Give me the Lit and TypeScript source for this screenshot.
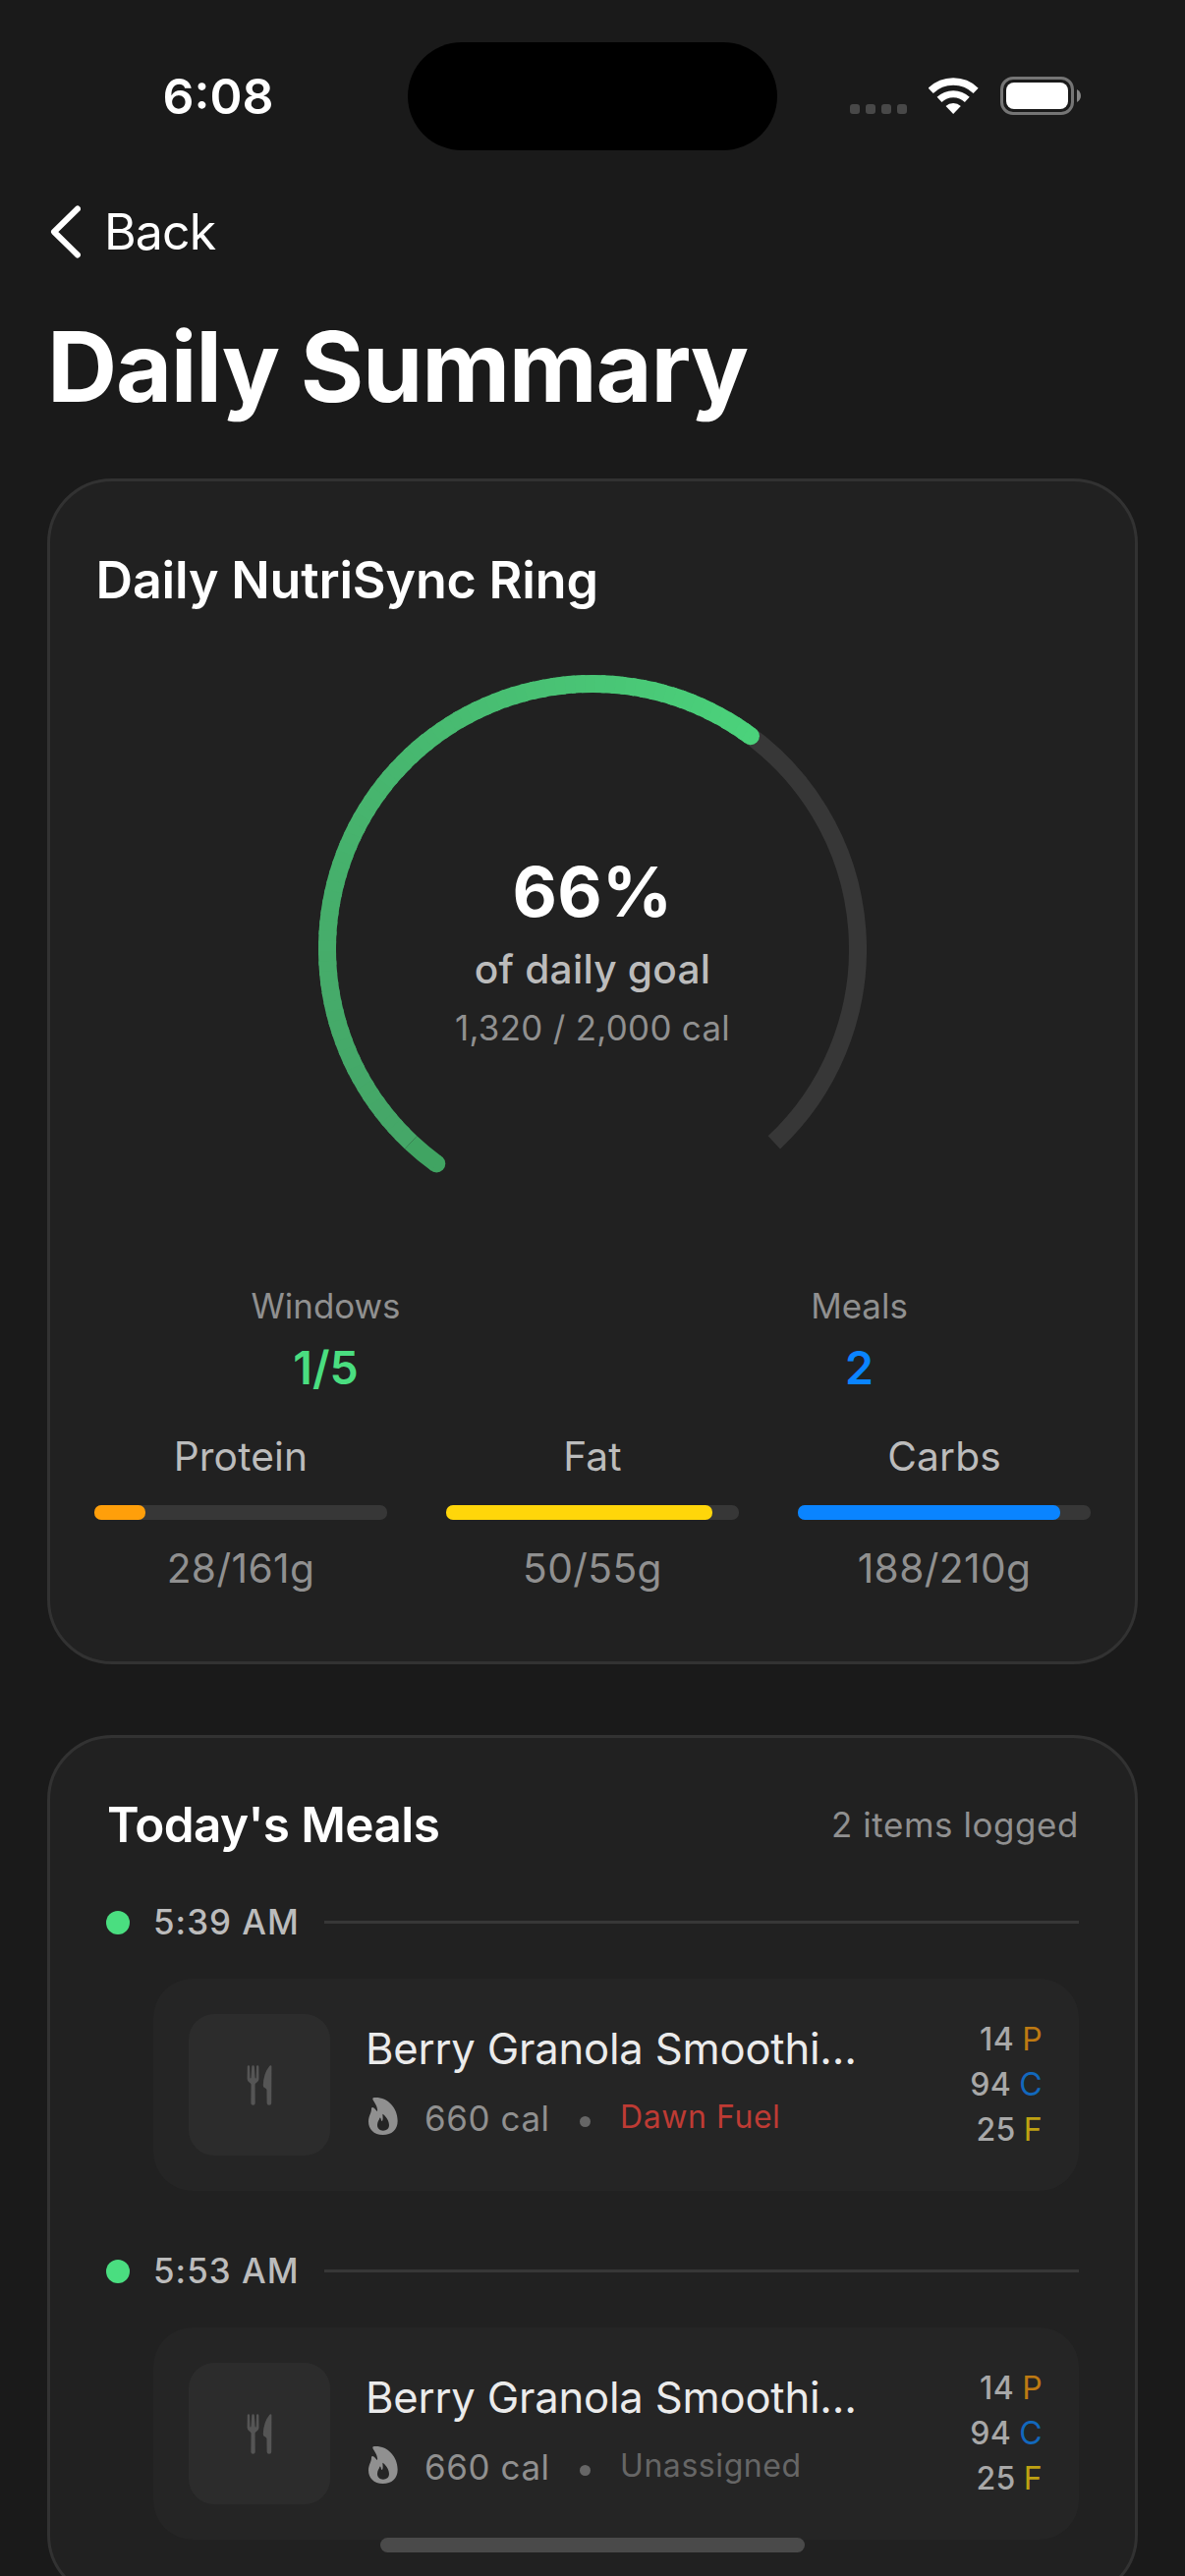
import { LitElement, html, svg, css } from "lit";
import { customElement, property } from "lit/decorators.js";

interface Macro { name: string; value: number; goal: number; tone: string; }
interface Meal { time: string; title: string; calories: number; window: string; assigned: boolean; p: number; c: number; f: number; }

const MACROS: Macro[] = [
  { name: "Protein", value: 28, goal: 161, tone: "orange" },
  { name: "Fat", value: 50, goal: 55, tone: "yellow" },
  { name: "Carbs", value: 188, goal: 210, tone: "blue" },
];

const MEALS: Meal[] = [
  { time: "5:39 AM", title: "Berry Granola Smoothi…", calories: 660, window: "Dawn Fuel", assigned: true, p: 14, c: 94, f: 25 },
  { time: "5:53 AM", title: "Berry Granola Smoothi…", calories: 660, window: "Unassigned", assigned: false, p: 14, c: 94, f: 25 },
];

@customElement("status-bar")
class StatusBar extends LitElement {
  static styles = css`
    :host { display: flex; align-items: center; height: 195px; }
    .time { box-sizing: border-box; width: 415px; padding-left: 165.5px; font-size: 50px; font-weight: 600; line-height: 60px; color: #fff; }
    .island { width: 376px; height: 110px; border-radius: 55px; background: #000; }
    .icons { display: flex; align-items: flex-start; margin-left: 74px; }
    .icons svg { display: block; }
    .wifi { margin-left: 22px; }
    .battery { margin-left: 22px; }
  `;
  render() {
    return html`
      <div class="time">6:08</div>
      <div class="island"></div>
      <div class="icons">
        <svg width="58" height="39" viewBox="0 0 58 39" fill="#484848">
          ${[0, 16, 32, 48].map((x) => svg`<rect x=${x} y="28" width="10" height="10" rx="3"></rect>`)}
        </svg>
        <svg class="wifi" width="51" height="39" viewBox="0 -3 153 117" fill="none" stroke="#fff">
          <path d="M6.7 39.8A99 99 0 0 1 144.3 39.8" stroke-width="22"></path>
          <path d="M33.1 67.1A61 61 0 0 1 117.9 67.1" stroke-width="21"></path>
          <path d="M75.5 111L52.6 87.3A33 33 0 0 1 98.4 87.3Z" fill="#fff" stroke="none"></path>
        </svg>
        <svg class="battery" width="83" height="39" viewBox="0 0 83 39">
          <rect x="1.5" y="1.5" width="72" height="36" rx="11.5" fill="none" stroke="#757575" stroke-width="3"></rect>
          <rect x="6" y="6" width="63" height="27" rx="8" fill="#fff"></rect>
          <path d="M78 13C83.3 15.5 83.3 23.5 78 26Z" fill="#858585"></path>
        </svg>
      </div>`;
  }
}

@customElement("goal-ring")
class GoalRing extends LitElement {
  @property({ type: Number }) consumed = 0;
  @property({ type: Number }) goal = 1;

  static styles = css`
    :host { display: grid; justify-content: center; }
    svg, .center { grid-area: 1 / 1; }
    svg { display: block; }
    .center { display: flex; flex-direction: column; align-items: center; padding-top: 179px; }
    .pct { font-size: 70px; font-weight: 700; line-height: 84px; letter-spacing: 0.4px; color: #fff; }
    .of { margin-top: 12px; font-size: 40.7px; font-weight: 500; line-height: 50px; letter-spacing: 0.22px; color: #bcbcbc; }
    .cal { margin-top: 13px; font-size: 34.9px; line-height: 42px; letter-spacing: 0.3px; color: #909090; }
  `;

  private point(deg: number) {
    const a = (deg * Math.PI) / 180;
    return `${(279 + 270 * Math.cos(a)).toFixed(2)} ${(279 + 270 * Math.sin(a)).toFixed(2)}`;
  }

  private arc(from: number, to: number) {
    return `M${this.point(from)}A270 270 0 ${to - from > 180 ? 1 : 0} 1 ${this.point(to)}`;
  }

  private mix(t: number) {
    const a = [69, 167, 104], b = [75, 210, 123];
    return `rgb(${a.map((v, i) => Math.round(v + (b[i] - v) * t)).join(",")})`;
  }

  render() {
    const sweep = 273.6;
    const ratio = this.consumed / this.goal;
    const start = 126, seam = 133.2, end = start + sweep * ratio;
    const steps = 80;
    const step = (end - seam) / steps;
    const cap = (deg: number, fill: string) => {
      const [x, y] = this.point(deg).split(" ");
      return svg`<circle cx=${x} cy=${y} r="9" fill=${fill}></circle>`;
    };
    return html`
      <svg width="558" height="558" viewBox="0 0 558 558" fill="none" stroke-width="18">
        <path d=${this.arc(end - 2, 406.8)} stroke="#373737"></path>
        ${cap(end, this.mix(1))}
        ${Array.from({ length: steps }, (_, i) => steps - 1 - i).map((i) => {
          const t = i / (steps - 1);
          return svg`<path d=${this.arc(seam + i * step, Math.min(end, seam + (i + 1.4) * step))} stroke=${this.mix(Math.pow(t, 1.5))}></path>`;
        })}
        ${cap(start, "#40a462")}
        <path d=${this.arc(start, seam)} stroke="#40a462"></path>
      </svg>
      <div class="center">
        <div class="pct">${Math.round(ratio * 100)}%</div>
        <div class="of">of daily goal</div>
        <div class="cal">${this.consumed.toLocaleString("en-US")} / ${this.goal.toLocaleString("en-US")} cal</div>
      </div>`;
  }
}

@customElement("macro-bar")
class MacroBar extends LitElement {
  @property({ attribute: false }) macro!: Macro;
  static styles = css`
    :host { display: flex; flex-direction: column; align-items: center; }
    .name { font-size: 40.7px; line-height: 50px; letter-spacing: 0.15px; color: #bcbcbc; }
    .track { width: 100%; height: 15px; margin: 24px 0 25px; border-radius: 7px; background: #373737; }
    .fill { height: 15px; border-radius: 7px; }
    .orange { background: #ff9f0a; }
    .yellow { background: #ffd60a; }
    .blue { background: #0a84ff; }
    .value { font-size: 40.7px; line-height: 50px; letter-spacing: 0.4px; color: #909090; }
  `;
  render() {
    const m = this.macro;
    return html`
      <div class="name">${m.name}</div>
      <div class="track"><div class="fill ${m.tone}" style="width:${(m.value / m.goal) * 100}%"></div></div>
      <div class="value">${m.value}/${m.goal}g</div>`;
  }
}

@customElement("meal-row")
class MealRow extends LitElement {
  @property({ attribute: false }) meal!: Meal;
  static styles = css`
    :host { display: block; }
    .when { display: flex; align-items: center; gap: 24px; height: 45px; }
    .dot { width: 24px; height: 24px; border-radius: 50%; background: #4ade80; }
    .time { width: 150px; font-size: 34.9px; font-weight: 500; line-height: 45px; letter-spacing: 1px; color: #bcbcbc; white-space: nowrap; }
    .rule { flex: 1; height: 3px; background: #373737; }
    .card { display: flex; box-sizing: border-box; height: 216px; margin: 35px 0 0 48px; padding: 36px; border-radius: 40px; background: #252525; }
    .thumb { display: flex; align-items: center; justify-content: center; width: 144px; height: 144px; border-radius: 26px; background: #2c2c2c; }
    .body { flex: 1; min-width: 0; margin-left: 36px; padding-top: 8px; }
    .title { font-size: 43.6px; line-height: 55px; letter-spacing: -0.2px; color: #ebebeb; white-space: nowrap; }
    .meta { display: flex; align-items: flex-start; margin-top: 21px; white-space: nowrap; }
    .meta svg { display: block; margin: 1px 0 0 3px; }
    .cal { width: 129px; margin-left: 27px; font-size: 34.9px; line-height: 45px; letter-spacing: 0.6px; color: #909090; }
    .sep { width: 11px; height: 11px; margin: 20px 30px 0 29px; border-radius: 50%; background: #666; }
    .window { font-size: 32px; line-height: 41px; letter-spacing: 0.57px; color: #666; }
    .window.assigned { color: #be3b34; }
    .macros { display: flex; flex-direction: column; padding: 3px 1px 0 0; }
    .macro { display: flex; justify-content: flex-end; gap: 8px; font-size: 32px; line-height: 46px; letter-spacing: 0.4px; }
    .num { font-weight: 500; color: #a8a8a8; }
    .p { color: #be7a12; }
    .c { color: #1268bd; }
    .f { color: #bea112; }
  `;
  render() {
    const m = this.meal;
    return html`
      <div class="when"><div class="dot"></div><div class="time">${m.time}</div><div class="rule"></div></div>
      <div class="card">
        <div class="thumb">
          <svg width="26" height="41" viewBox="0 0 77 124" fill="#555">
            <path d="M5 1Q1.600 1 1.400 5L1 42Q1 50 8 54Q13 56.500 13 60L12.500 117Q12.500 123 19 123T25.500 117L25 60Q25 56.500 30 54Q37 50 37 42L36.600 5Q36.400 1 33 1T29.400 5L28.500 39Q28.400 40.500 27 40.500T25.300 39L23 5Q22.600 1 19 1T15 5L12.700 39Q12.500 40.500 11 40.500T9.500 39L8.600 5Q8.400 1 5 1Z"></path>
            <path d="M73 1Q76 1 76 4L75.500 117Q75.500 123 68.500 123T61.500 117L61 77Q61 74 58 72L53 69Q50 67 50 62Q51 25 70 2.500Q71.500 1 73 1Z"></path>
          </svg>
        </div>
        <div class="body">
          <div class="title">${m.title}</div>
          <div class="meta">
            <svg width="30" height="38" viewBox="0 0 90 114" fill="#909090" fill-rule="evenodd">
              <path d="M13 5C12 1 16 0 22 0C60 0 89 32 89 71C89 98 71 114 44 114C16 114 0 97 0 73C0 56 9 48 9 35C9 30 13 29 17 32C21 35 23 38 25 41C27 42 28 40 27 36C26 22 17 15 13 5ZM43 50C44 50 63 64 63 84C63 95 55 101 45 101C34 101 27 94 27 84C27 73 33 69 34 63C35 60 37 61 38 65C39 71 41 74 43 70C45 64 43 56 43 50Z"></path>
            </svg>
            <div class="cal">${m.calories} cal</div>
            <div class="sep"></div>
            <div class="window ${m.assigned ? "assigned" : ""}">${m.window}</div>
          </div>
        </div>
        <div class="macros">
          <div class="macro"><span class="num">${m.p}</span><span class="p">P</span></div>
          <div class="macro"><span class="num">${m.c}</span><span class="c">C</span></div>
          <div class="macro"><span class="num">${m.f}</span><span class="f">F</span></div>
        </div>
      </div>`;
  }
}

@customElement("app-root")
class AppRoot extends LitElement {
  static styles = css`
    :host { display: block; position: relative; box-sizing: border-box; width: 1206px; height: 2622px; overflow: hidden; background: #1a1a1a; font-family: Inter, "Liberation Sans", sans-serif; }
    .nav { display: flex; align-items: center; height: 81px; padding-left: 50px; }
    .nav svg { display: block; }
    .back { margin-left: 24px; font-size: 50px; line-height: 60px; letter-spacing: -0.9px; color: #fff; }
    .heading { margin: 37px 0 0 48px; font-size: 98.600px; font-weight: 700; line-height: 120px; letter-spacing: -1.300px; color: #fff; }
    .panel { box-sizing: border-box; width: 1110px; margin: 0 auto; border: 3px solid #323232; border-radius: 66px; background: #212121; }
    .summary { margin-top: 54px; padding: 69px 45px 69px; }
    .summary-title { padding-left: 1.500px; font-size: 52px; font-weight: 600; line-height: 64px; letter-spacing: -0.170px; color: #fff; }
    goal-ring { margin-top: 64px; }
    .stats { display: grid; grid-template-columns: 1fr 1fr; gap: 72px; margin-top: 63px; text-align: center; }
    .label { font-size: 34.900px; line-height: 43px; color: #909090; }
    .stat { margin-top: 13px; font-size: 46.500px; font-weight: 600; line-height: 56px; }
    .green { color: #4ade80; }
    .blue { color: #0a84ff; }
    .macros { display: grid; grid-template-columns: repeat(3, 1fr); gap: 60px; margin-top: 38px; }
    .meals { margin-top: 72px; padding: 58px 57px 58px; }
    .meals-head { display: flex; align-items: center; justify-content: space-between; height: 60px; margin-bottom: 47px; }
    .meals-title { padding-left: 1px; font-size: 49.500px; font-weight: 600; letter-spacing: -0.600px; color: #fff; }
    .count { font-size: 34.900px; letter-spacing: 0.600px; color: #909090; }
    meal-row + meal-row { margin-top: 59px; }
    .home { position: absolute; left: 387px; bottom: 24px; width: 432px; height: 15px; border-radius: 8px; background: #4a4a4a; }
  `;
  render() {
    return html`
      <status-bar></status-bar>
      <div class="nav">
        <svg width="32" height="54" viewBox="0 0 32 54" fill="none" stroke="#fff" stroke-width="6" stroke-linecap="round" stroke-linejoin="round"><path d="M29 3.500L5 27L29 50.500"></path></svg>
        <span class="back">Back</span>
      </div>
      <div class="heading">Daily Summary</div>
      <div class="panel summary">
        <div class="summary-title">Daily NutriSync Ring</div>
        <goal-ring .consumed=${1320} .goal=${2000}></goal-ring>
        <div class="stats">
          <div><div class="label">Windows</div><div class="stat green">1/5</div></div>
          <div><div class="label">Meals</div><div class="stat blue">2</div></div>
        </div>
        <div class="macros">${MACROS.map((m) => html`<macro-bar .macro=${m}></macro-bar>`)}</div>
      </div>
      <div class="panel meals">
        <div class="meals-head"><span class="meals-title">Today's Meals</span><span class="count">2 items logged</span></div>
        ${MEALS.map((m) => html`<meal-row .meal=${m}></meal-row>`)}
      </div>
      <div class="home"></div>`;
  }
}
